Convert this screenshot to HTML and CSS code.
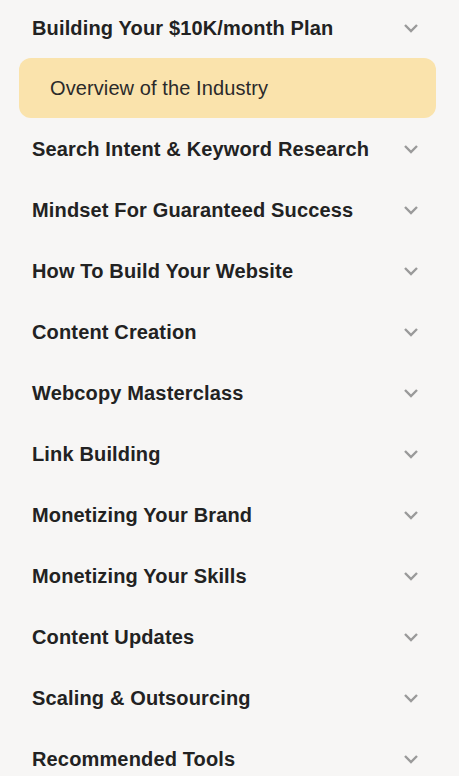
FILE: index.html
```html
<!DOCTYPE html>
<html lang="en">
<head>
    <meta charset="UTF-8" />
    <meta name="viewport" content="width=device-width, initial-scale=1.0"/>
    <title>Course Modules</title>
    <link rel="stylesheet" href="styles.css">
</head>
<body>
    <div class="modules">
        <div class="module open">
            <div class="module-head">
                <span>Building Your $10K/month Plan</span>
                <svg class="chevron" viewBox="0 0 16 10"><path d="M2 2 L8 8 L14 2"/></svg>
            </div>
            <a class="lesson active" href="#">Overview of the Industry</a>
        </div>
        <div class="module">
            <div class="module-head">
                <span>Search Intent &amp; Keyword Research</span>
                <svg class="chevron" viewBox="0 0 16 10"><path d="M2 2 L8 8 L14 2"/></svg>
            </div>
        </div>
        <div class="module">
            <div class="module-head">
                <span>Mindset For Guaranteed Success</span>
                <svg class="chevron" viewBox="0 0 16 10"><path d="M2 2 L8 8 L14 2"/></svg>
            </div>
        </div>
        <div class="module">
            <div class="module-head">
                <span>How To Build Your Website</span>
                <svg class="chevron" viewBox="0 0 16 10"><path d="M2 2 L8 8 L14 2"/></svg>
            </div>
        </div>
        <div class="module">
            <div class="module-head">
                <span>Content Creation</span>
                <svg class="chevron" viewBox="0 0 16 10"><path d="M2 2 L8 8 L14 2"/></svg>
            </div>
        </div>
        <div class="module">
            <div class="module-head">
                <span>Webcopy Masterclass</span>
                <svg class="chevron" viewBox="0 0 16 10"><path d="M2 2 L8 8 L14 2"/></svg>
            </div>
        </div>
        <div class="module">
            <div class="module-head">
                <span>Link Building</span>
                <svg class="chevron" viewBox="0 0 16 10"><path d="M2 2 L8 8 L14 2"/></svg>
            </div>
        </div>
        <div class="module">
            <div class="module-head">
                <span>Monetizing Your Brand</span>
                <svg class="chevron" viewBox="0 0 16 10"><path d="M2 2 L8 8 L14 2"/></svg>
            </div>
        </div>
        <div class="module">
            <div class="module-head">
                <span>Monetizing Your Skills</span>
                <svg class="chevron" viewBox="0 0 16 10"><path d="M2 2 L8 8 L14 2"/></svg>
            </div>
        </div>
        <div class="module">
            <div class="module-head">
                <span>Content Updates</span>
                <svg class="chevron" viewBox="0 0 16 10"><path d="M2 2 L8 8 L14 2"/></svg>
            </div>
        </div>
        <div class="module">
            <div class="module-head">
                <span>Scaling &amp; Outsourcing</span>
                <svg class="chevron" viewBox="0 0 16 10"><path d="M2 2 L8 8 L14 2"/></svg>
            </div>
        </div>
        <div class="module">
            <div class="module-head">
                <span>Recommended Tools</span>
                <svg class="chevron" viewBox="0 0 16 10"><path d="M2 2 L8 8 L14 2"/></svg>
            </div>
        </div>
    </div>
</body>
</html>
```

FILE: styles.css
```css
body {
    font-family: "Liberation Sans", Arial, sans-serif;
    background-color: #f7f6f5;
    margin: 0;
    padding: 0;
    color: #222;
    overflow: hidden;
}

.modules {
    display: flex;
    flex-direction: column;
    margin-top: -3px;
    padding: 0 23px 0 19px;
}

.module-head {
    height: 61px;
    display: flex;
    align-items: center;
    justify-content: space-between;
    padding: 1px 17px 0 13px;
    box-sizing: border-box;
    font-size: 20px;
    font-weight: bold;
    letter-spacing: 0.15px;
}

.chevron {
    width: 16px;
    height: 10px;
    fill: none;
    stroke: #9a9a9a;
    stroke-width: 2.4;
}

.lesson {
    display: flex;
    align-items: center;
    height: 60px;
    padding: 1px 31px 0;
    box-sizing: border-box;
    background-color: #fae3ac;
    border-radius: 12px;
    color: #2a2a2a;
    text-decoration: none;
    font-size: 20px;
    letter-spacing: 0.1px;
}
```
